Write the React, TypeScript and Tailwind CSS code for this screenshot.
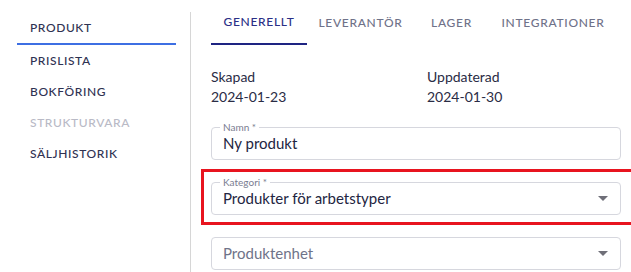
import React from "react";

const font = { fontFamily: "Lato, 'Noto Sans', sans-serif" };

function Arrow() {
  return (
    <svg width="10" height="5" viewBox="0 0 10 5" className="shrink-0">
      <path d="M0 0 L10 0 L5 5 Z" fill="#6f6f78" />
    </svg>
  );
}

function Field({ label, value, placeholder, select }: { label?: string; value?: string; placeholder?: string; select?: boolean }) {
  return (
    <div className="relative h-[33px] w-[410px] rounded-[4px] border border-[#d6d7de] flex items-center pl-[11px] pr-[12px]">
      {label && (
        <span className="absolute -top-[7px] left-[8px] bg-white px-[3px] text-[10px] leading-[12px] text-[#7a7d90]">
          {label}
        </span>
      )}
      <span className={`flex-1 text-[15px] ${value ? "text-[#23253f]" : "text-[#6f7389]"}`}>{value ?? placeholder}</span>
      {select && <Arrow />}
    </div>
  );
}

export default function App() {
  const nav = [
    { t: "PRODUKT", active: true },
    { t: "PRISLISTA" },
    { t: "BOKFÖRING" },
    { t: "STRUKTURVARA", disabled: true },
    { t: "SÄLJHISTORIK" },
  ];
  const tabs = [
    { t: "GENERELLT", w: "w-[96px]", active: true },
    { t: "LEVERANTÖR", w: "w-[107px]" },
    { t: "LAGER", w: "w-[75px]" },
    { t: "INTEGRATIONER", w: "w-[128px]" },
  ];
  return (
    <div className="w-[631px] h-[272px] bg-white flex overflow-hidden" style={font}>
      <div className="w-[190px] shrink-0 pt-[12px] pl-[17px] pr-[14px]">
        {nav.map((n) => (
          <div
            key={n.t}
            className={`h-[31px] flex items-center pl-[13px] text-[12px] font-medium tracking-[0.6px] ${
              n.active ? "h-[33px] border-b-2 border-[#3d6fe3] text-[#2f3252]" : n.disabled ? "text-[#b9bac6]" : "text-[#2f3252]"
            }`}
          >
            {n.t}
          </div>
        ))}
      </div>
      <div className="mt-[12px] w-px self-stretch bg-[#d6d6d6]" />
      <div className="flex-1 pl-[20px]">
        <div className="flex h-[45px]">
          {tabs.map((t) => (
            <div
              key={t.t}
              className={`${t.w} flex items-center justify-center text-[12px] font-medium tracking-[0.7px] ${
                t.active ? "border-b-2 border-[#1e2482] text-[#2b2f86]" : "text-[#6f7289]"
              }`}
            >
              {t.t}
            </div>
          ))}
        </div>
        <div className="flex mt-[22px] text-[14px] leading-[20px] text-[#2a2c45]">
          <div className="w-[216px]">
            <div>Skapad</div>
            <div>2024-01-23</div>
          </div>
          <div>
            <div>Uppdaterad</div>
            <div>2024-01-30</div>
          </div>
        </div>
        <div className="mt-[20px] flex flex-col gap-[22px]">
          <Field label="Namn *" value="Ny produkt" />
          <div className="relative">
            <Field label="Kategori *" value="Produkter för arbetstyper" select />
            <div className="pointer-events-none absolute -left-[10px] -top-[13px] -bottom-[10px] -right-[6px] border-[3px] border-[#e8141f]" />
          </div>
          <Field placeholder="Produktenhet" select />
        </div>
      </div>
    </div>
  );
}
